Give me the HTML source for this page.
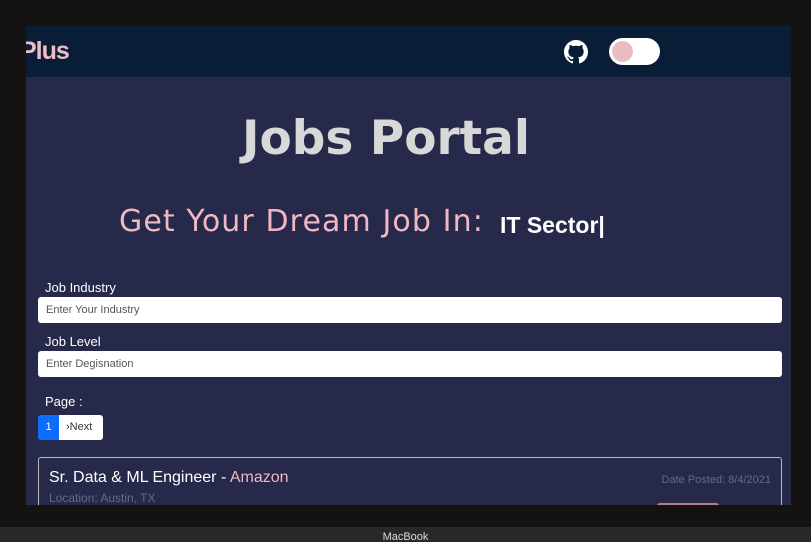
<!DOCTYPE html>
<html><head><meta charset="utf-8">
<style>
*{margin:0;padding:0;box-sizing:border-box}
html,body{width:811px;height:542px;overflow:hidden}
body{background:#141312;position:relative;font-family:"Liberation Sans",sans-serif}
#screen{position:absolute;left:26px;top:26px;width:765px;height:479px;background:#26294a;overflow:hidden}
#nav{position:absolute;left:0;top:0;width:765px;height:51px;background:#0a1d36}
#brand{position:absolute;left:-6px;top:11px;color:#f0bcc6;font-weight:bold;font-size:25px;letter-spacing:-1px}
#gh{position:absolute;left:538px;top:14px}
#tog{position:absolute;left:583px;top:12px;width:51px;height:27px;background:#fff;border-radius:14px}
#tog i{position:absolute;left:3px;top:3px;width:21px;height:21px;border-radius:50%;background:#ecbcc3}
h1{position:absolute;left:216px;top:85px;font-family:"DejaVu Sans",sans-serif;font-size:47px;color:#d8d8d8;font-weight:bold;white-space:nowrap}
#dream{position:absolute;left:93px;top:178px;font-family:"DejaVu Sans",sans-serif;font-size:30px;color:#efb8c2;letter-spacing:1.1px;white-space:nowrap}
#it{position:absolute;left:474px;top:186px;font-size:23px;color:#fff;font-weight:bold}
.lbl{position:absolute;left:19px;color:#fff;font-size:13px}
.inp{position:absolute;left:12px;width:744px;height:26px;background:#fff;border-radius:3px;font-size:11px;color:#555;padding:7px 8px}
#pg1{position:absolute;left:12px;top:389px;width:21px;height:25px;background:#0d6efd;color:#fff;font-size:11px;text-align:center;line-height:25px;border-radius:3px 0 0 3px}
#pg2{position:absolute;left:33px;top:389px;width:44px;height:25px;background:#fff;color:#333;font-size:11px;line-height:25px;padding-left:7px;border-radius:0 3px 3px 0}
#card{position:absolute;left:12px;top:431px;width:744px;height:80px;border:1px solid #bbb;border-radius:3px}
#title{position:absolute;left:10px;top:11px;color:#fff;font-size:16px}
#title span{color:#efb8c2}
#loc{position:absolute;left:10px;top:33px;color:#666a85;font-size:12px}
#date{position:absolute;right:10px;top:16px;color:#666a85;font-size:11px}
#btn{position:absolute;left:618px;top:45px;width:62px;height:20px;background:#b77f8c;border-radius:3px}
#bar{position:absolute;left:0;top:527px;width:811px;height:15px;background:#2a2826;color:#ddd;font-size:11px;text-align:center;line-height:20px;overflow:hidden}
</style></head><body>
<div id="screen">
 <div id="nav">
  <div id="brand">Plus</div>
  <svg id="gh" width="24" height="24" viewBox="0 0 16 16"><path fill="#fff" d="M8 0C3.58 0 0 3.58 0 8c0 3.54 2.29 6.53 5.47 7.590.4.07.55-.17.55-.38v-1.33c-2.230.48-2.7-1.07-2.7-1.07-.36-.92-.89-1.17-.89-1.17-.73-.5.06-.49.06-.49.8.06 1.23.83 1.23.83.71 1.22 1.87.87 2.33.66.07-.52.28-.87.51-1.07-1.78-.2-3.65-.89-3.65-3.95 0-.87.31-1.59.82-2.15-.08-.2-.36-1.02.08-2.12 0 0 .67-.21 2.2.82A7.6 7.6 0 0 1 8 3.87c.68 0 1.36.09 2 .27 1.53-1.04 2.2-.82 2.2-.82.44 1.1.16 1.920.08 2.12.51.56.82 1.270.82 2.15 0 3.07-1.87 3.75-3.65 3.95.29.25.54.73.54 1.48v2.2c0 .21.15.46.55.38A8 8 0 0 0 16 8c0-4.42-3.58-8-8-8z"/></svg>
  <div id="tog"><i></i></div>
 </div>
 <h1>Jobs Portal</h1>
 <div id="dream">Get Your Dream Job In:</div>
 <div id="it">IT Sector|</div>
 <div class="lbl" style="top:254px">Job Industry</div>
 <div class="inp" style="top:271px">Enter Your Industry</div>
 <div class="lbl" style="top:308px">Job Level</div>
 <div class="inp" style="top:325px">Enter Degisnation</div>
 <div class="lbl" style="top:368px">Page :</div>
 <div id="pg1">1</div><div id="pg2">›Next</div>
 <div id="card">
  <div id="title">Sr. Data &amp; ML Engineer - <span>Amazon</span></div>
  <div id="loc">Location: Austin, TX</div>
  <div id="date">Date Posted: 8/4/2021</div>
  <div id="btn"></div>
 </div>
</div>
<div id="bar">MacBook</div>
</body></html>
